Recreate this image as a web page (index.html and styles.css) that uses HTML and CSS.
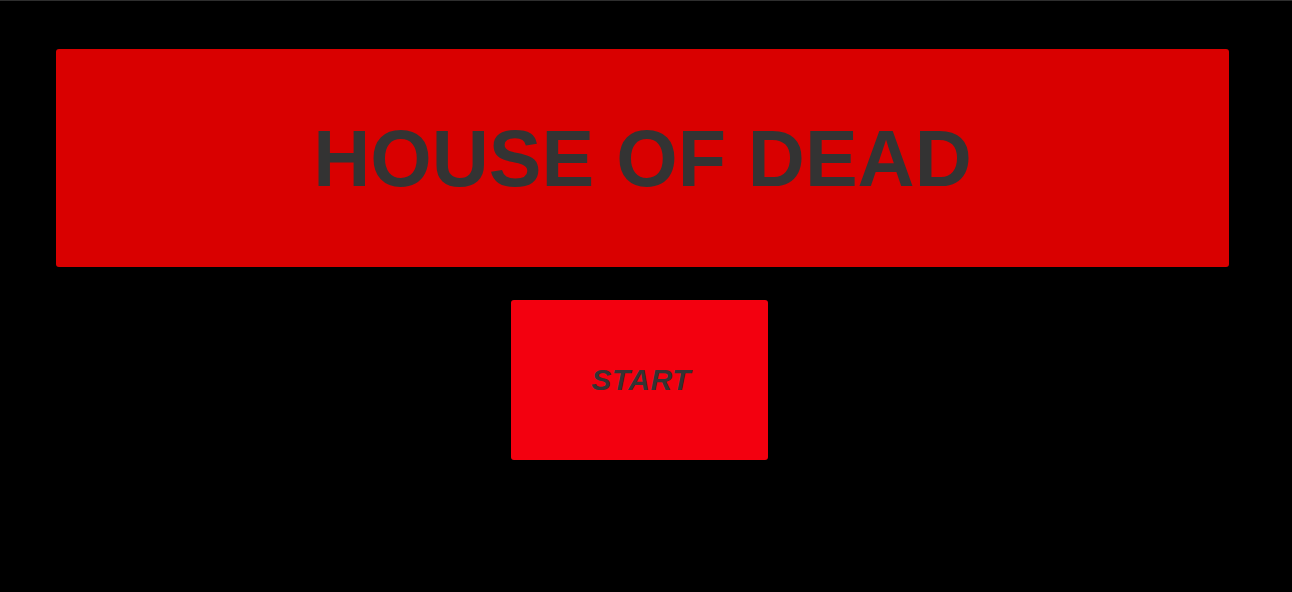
FILE: index.html
```html
<!DOCTYPE html>
<html>
<head>
<meta charset="utf-8">
<link rel="stylesheet" href="styles.css">
</head>
<body>
<div class="topline"></div>
<main class="screen">
  <header class="title-box">
    <h1 class="title">HOUSE OF DEAD</h1>
  </header>
  <button class="start">START</button>
</main>
</body>
</html>
```

FILE: styles.css
```css
html, body {
  margin: 0;
  padding: 0;
  background: #000;
  height: 100%;
}
body {
  font-family: "Liberation Sans", Arial, sans-serif;
}
.topline {
  height: 1px;
  background: #2e2e2e;
}
.screen {
  display: flex;
  flex-direction: column;
  align-items: center;
  padding: 48px 63px 0 56px;
}
.title-box {
  align-self: stretch;
  height: 218px;
  background: #d90000;
  border-radius: 3px;
  display: flex;
  align-items: center;
  justify-content: center;
}
.title {
  margin: 0;
  color: #333;
  font-size: 79px;
  font-weight: bold;
  line-height: 1;
}
.start {
  margin-top: 33px;
  margin-left: -7px;
  width: 257px;
  height: 160px;
  background: #f3000f;
  border: none;
  border-radius: 3px;
  color: #333;
  font-family: "Liberation Sans", Arial, sans-serif;
  font-size: 30px;
  font-weight: bold;
  font-style: italic;
  letter-spacing: 0.5px;
  padding: 0 0 0 4px;
}
```
